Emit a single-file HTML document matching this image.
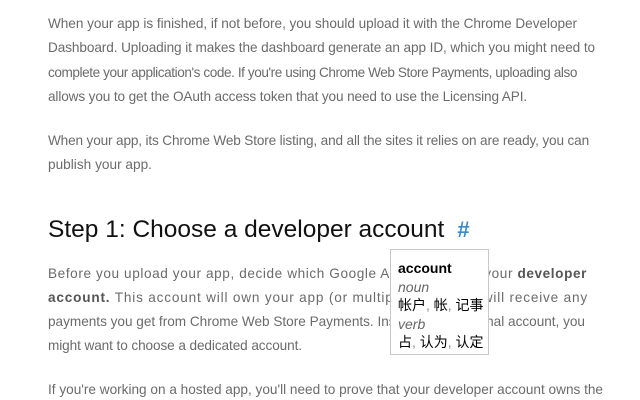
<!DOCTYPE html>
<html><head><meta charset="utf-8"><style>
body{margin:0;width:640px;height:400px;overflow:hidden;background:#fff;font-family:"Liberation Sans",sans-serif;}
.l{position:absolute;left:48px;font-size:13.6px;color:#6b6b6b;white-space:nowrap;line-height:16px;}
b{color:#555;}
h1{position:absolute;left:48px;top:215px;margin:0;font-weight:normal;font-size:24.5px;color:#111;white-space:nowrap;line-height:30px;}
h1 span{color:#3a8ccf;margin-left:13px;font-weight:bold;font-size:22px;}
.tip{position:absolute;left:390px;top:249px;width:99px;height:106px;background:#fff;border:1px solid #c8c8c8;font-family:"Liberation Sans","Noto Sans CJK SC",sans-serif;font-size:14px;line-height:18.5px;color:#000;padding:9px 0 0 7px;box-sizing:border-box;}
.tip i{color:#666;}
</style></head><body>
<div class="l" style="top:16px">When your app is finished, if not before, you should upload it with the Chrome Developer</div>
<div class="l" style="top:40px">Dashboard. Uploading it makes the dashboard generate an app ID, which you might need to</div>
<div class="l" style="top:65px">complete your application's code. If you're using Chrome Web Store Payments, uploading also</div>
<div class="l" style="top:89px">allows you to get the OAuth access token that you need to use the Licensing API.</div>
<div class="l" style="top:133px">When your app, its Chrome Web Store listing, and all the sites it relies on are ready, you can</div>
<div class="l" style="top:157px">publish your app.</div>
<h1>Step 1: Choose a developer account<span>#</span></h1>
<div class="l" style="top:266px">Before you upload your app, decide which Google Account will be your <b>developer</b></div>
<div class="l" style="top:290px"><b>account.</b> This account will own your app (or multiple apps) and will receive any</div>
<div class="l" style="top:314px">payments you get from Chrome Web Store Payments. Instead of a personal account, you</div>
<div class="l" style="top:338px">might want to choose a dedicated account.</div>
<div class="l" style="top:382px">If you're working on a hosted app, you'll need to prove that your developer account owns the</div>
<div class="tip"><b style="color:#000">account</b><br><i>noun</i><br>帐户<span style="color:#888">,</span> 帐<span style="color:#888">,</span> 记事<br><i>verb</i><br>占<span style="color:#888">,</span> 认为<span style="color:#888">,</span> 认定</div>
<script>
var t=[529,547,529,479,541,104,539,540,537,254,555];
document.querySelectorAll('.l').forEach(function(e,i){
 var w=t[i]; if(w){var r=e.getBoundingClientRect().width; var n=e.textContent.length; e.style.letterSpacing=((w-r)/n)+'px';}
});
</script>
</body></html>
